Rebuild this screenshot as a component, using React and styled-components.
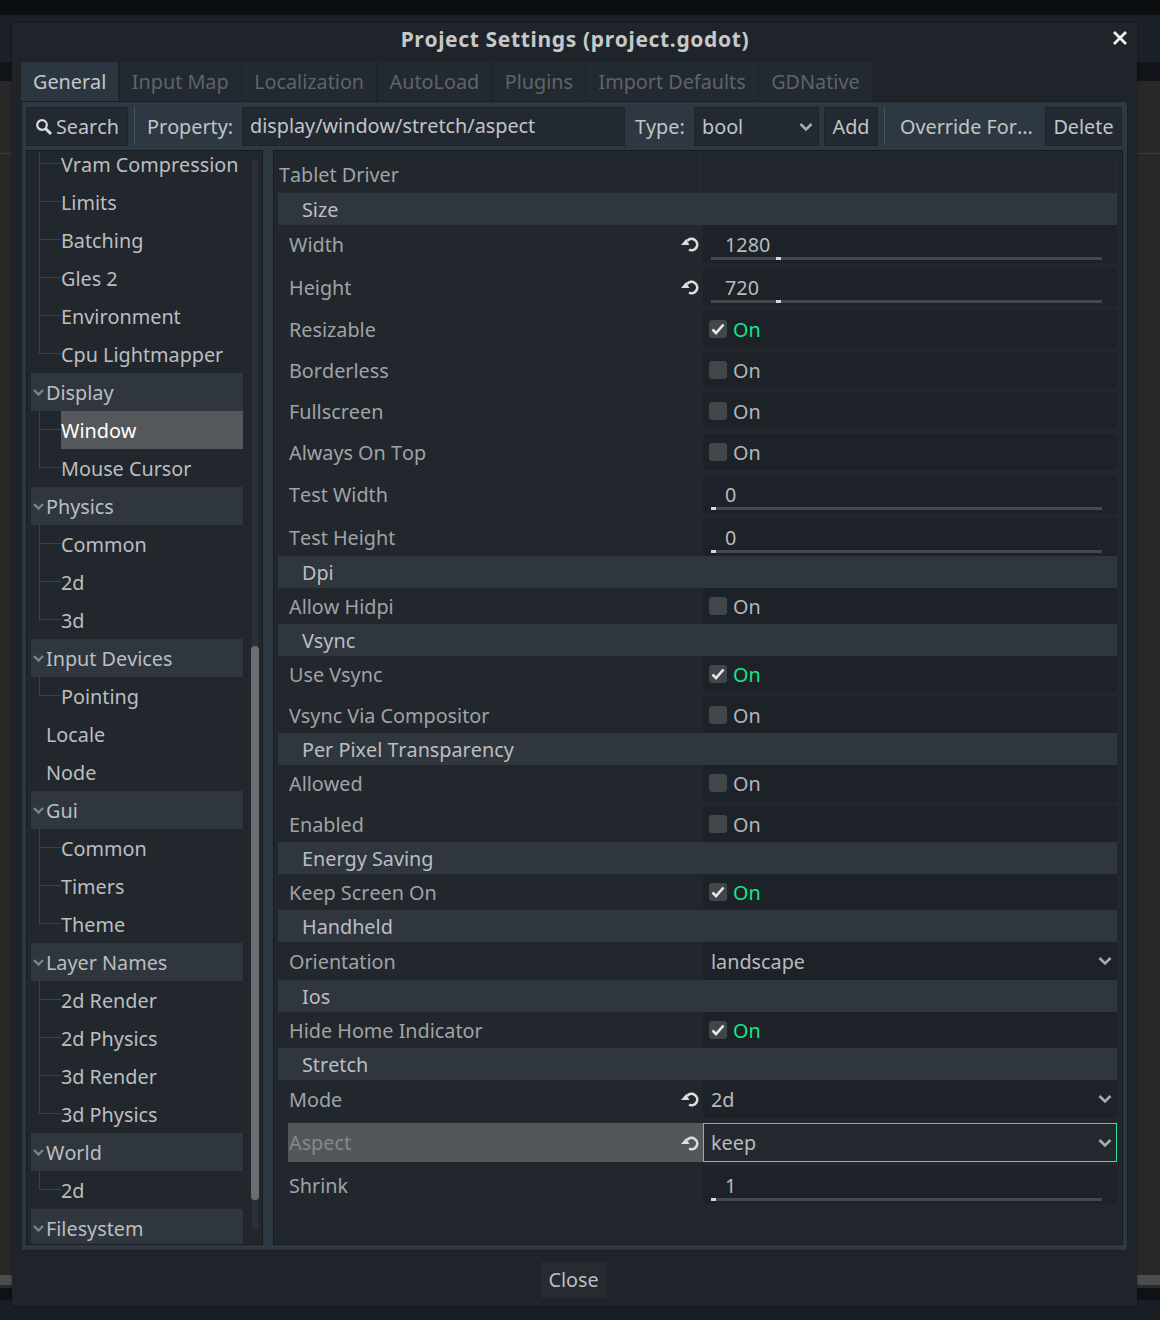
import styled, { createGlobalStyle } from 'styled-components';

const GlobalStyle = createGlobalStyle`
  html, body {
    margin: 0;
    padding: 0;
    width: 1160px;
    height: 1320px;
    overflow: hidden;
  }
  body {
    font-family: "Noto Sans", sans-serif;
    font-size: 19.8px;
    font-kerning: none;
    background: linear-gradient(
      to bottom,
      #0b0f12 0 15px,
      #1b2026 15px 62px,
      #11151a 62px 81px,
      #282828 81px 153px,
      #5a2a3c 153px 154px,
      #282828 154px 1275px,
      #4c4c4c 1275px 1285px,
      #2a2a2a 1285px 1288px,
      #0e1216 1288px 1300px,
      #1a1f25 1300px 1320px
    );
  }
`;

const DialogWindow = styled.div`
  box-sizing: border-box;
  width: 1125px;
  height: 1283px;
  margin: 23px 0 0 12px;
  padding: 0 9px;
  background: #1f242b;
  display: flex;
  flex-direction: column;
  box-shadow: 0 0 2px rgba(0, 0, 0, 0.5);
`;

const TitleBar = styled.div`
  box-sizing: border-box;
  height: 39px;
  flex: none;
  position: relative;
  display: flex;
  align-items: center;
  justify-content: center;
  font-size: 21px;
  font-weight: 700;
  letter-spacing: 0.65px;
  color: #c6c8c9;
  padding: 0 0 7px 1px;
`;

const CloseX = styled.svg`
  position: absolute;
  right: 0;
  top: 7px;
  width: 16px;
  height: 16px;
`;

const TabBar = styled.div`
  display: flex;
  gap: 1.5px;
  height: 39px;
  flex: none;
`;

const Tab = styled.div`
  box-sizing: border-box;
  height: 39px;
  padding: 0 12px;
  display: flex;
  align-items: center;
  background: ${p => (p.$active ? '#2c3640' : '#232930')};
  color: ${p => (p.$active ? '#c4c6c7' : '#5f6467')};
`;

const TabPanel = styled.div`
  box-sizing: border-box;
  height: 1150px;
  flex: none;
  padding: 6px 6px 6px 5px;
  background: #2e3842;
  box-shadow: inset 0 0 0 1px #1a1f25;
  display: flex;
  flex-direction: column;
  gap: 4px;
`;

const Toolbar = styled.div`
  height: 39px;
  flex: none;
  display: flex;
  align-items: stretch;
  color: #c2c4c5;
`;

const ToolButton = styled.div`
  box-sizing: border-box;
  display: flex;
  align-items: center;
  justify-content: ${p => (p.$between ? 'space-between' : 'center')};
  width: ${p => p.$w}px;
  margin-right: ${p => p.$mr || 0}px;
  padding: ${p => p.$pad || '0'};
  background: #232930;
  box-shadow: inset 0 0 0 1px #1f242a;
`;

const Separator = styled.div`
  width: 1px;
  height: 37px;
  margin: 0 ${p => p.$r}px 0 ${p => p.$l}px;
  background: #48525b;
  flex: none;
`;

const ToolLabel = styled.div`
  display: flex;
  align-items: center;
  width: ${p => p.$w}px;
  flex: none;
`;

const PropertyInput = styled.div`
  box-sizing: border-box;
  width: 383px;
  margin-right: 10px;
  padding: 0 0 3px 8px;
  display: flex;
  align-items: center;
  background: #232930;
  box-shadow: inset 0 0 0 1px #1f242a;
`;

const Split = styled.div`
  flex: 1;
  min-height: 0;
  display: flex;
  gap: 10px;
`;

const TreePanel = styled.div`
  box-sizing: border-box;
  width: 237px;
  height: 1095px;
  flex: none;
  background: #21272d;
  border: 1px solid #181c21;
  overflow: hidden;
  display: flex;
  padding-left: 4px;
`;

const TreeList = styled.div`
  width: 212px;
  flex: none;
  margin-top: -6px;
`;

const TreeRow = styled.div`
  box-sizing: border-box;
  position: relative;
  height: 38px;
  display: flex;
  align-items: center;
  color: ${p => (p.$selected ? '#ffffff' : '#bcbec0')};
  padding-left: ${p => (p.$depth === 2 ? 30 : 15)}px;
  background: ${p => {
    if (p.$selected) return 'linear-gradient(to right, transparent 30px, #54585b 30px)';
    return p.$group ? '#2f363d' : 'transparent';
  }};

  &::before {
    content: ${p => (p.$depth === 2 ? '""' : 'none')};
    position: absolute;
    left: 8px;
    top: 0;
    width: 1px;
    height: ${p => (p.$last ? '19px' : '38px')};
    background: #3b4248;
  }

  &::after {
    content: ${p => (p.$depth === 2 ? '""' : 'none')};
    position: absolute;
    left: 8px;
    top: 18px;
    width: 22px;
    height: 1px;
    background: #3b4248;
  }
`;

const Arrow = styled.svg`
  position: absolute;
  left: 2px;
  top: 14px;
  width: 11px;
  height: 11px;
`;

const ScrollTrack = styled.div`
  width: 6px;
  height: 1070px;
  margin: 9px 0 0 9px;
  flex: none;
  position: relative;
  background: #2b3138;
  border-radius: 3px;
`;

const ScrollGrab = styled.div`
  position: absolute;
  left: -1px;
  top: 486px;
  width: 8px;
  height: 554px;
  border-radius: 4px;
  background: #6a6e71;
`;

const Inspector = styled.div`
  box-sizing: border-box;
  width: 850px;
  height: 1095px;
  flex: none;
  background: #21272d;
  border: 1px solid #181c21;
  padding: 4px 5px 0 4px;
  display: flex;
  flex-direction: column;
`;

const TabletRow = styled.div`
  box-sizing: border-box;
  height: 38px;
  flex: none;
  display: flex;
  align-items: center;
  border-top: 1px solid #262c32;
  color: #a0a3a5;
  padding-left: 1px;
  position: relative;
`;

const TabletValue = styled.div`
  margin-left: auto;
  width: 418px;
  height: 100%;
  border-left: 1px solid #2a3036;
  border-right: 1px solid #262c32;
  box-sizing: border-box;
`;

const Section = styled.div`
  height: 32px;
  flex: none;
  display: flex;
  align-items: center;
  padding-left: 24px;
  background: #2f363d;
  color: #bcbec0;
`;

const PropRow = styled.div`
  height: ${p => p.$h}px;
  margin-bottom: ${p => p.$mb || 0}px;
  flex: none;
  display: flex;
`;

const PropLabel = styled.div`
  box-sizing: border-box;
  width: 415px;
  margin-left: 10px;
  padding-left: 1px;
  display: flex;
  align-items: center;
  justify-content: space-between;
  color: ${p => (p.$hover ? '#85898b' : '#a0a3a5')};
  background: ${p => (p.$hover ? '#53575a' : 'transparent')};
`;

const ValueBox = styled.div`
  box-sizing: border-box;
  width: 414px;
  flex: none;
  display: flex;
  align-items: center;
  color: #b8babc;
  background: ${p => (p.$focus ? '#23292f' : '#1d2228')};
  border: ${p => (p.$focus ? '1px solid #2ee59d' : 'none')};
  padding: ${p => (p.$focus ? '0 4px 0 7px' : '0 5px 0 8px')};
`;

const SliderBox = styled(ValueBox)`
  flex-direction: column;
  align-items: stretch;
  padding: 0 15px 0 8px;
`;

const SliderText = styled.div`
  height: 32px;
  padding: 6px 0 0 14px;
  box-sizing: border-box;
  display: flex;
  align-items: center;
`;

const SliderBar = styled.div`
  height: 3px;
  background: #44494d;
  position: relative;
`;

const SliderGrab = styled.div`
  position: absolute;
  top: 0;
  height: 3px;
  width: 5px;
  background: #d5d6d7;
`;

const CheckBox = styled.div`
  width: 18px;
  height: 18px;
  border-radius: 3px;
  margin: 0 6px 0 -2px;
  background: #41464b;
  display: flex;
  align-items: center;
  justify-content: center;
`;

const OnText = styled.span`
  color: ${p => (p.$on ? '#17e68a' : '#b4b6b8')};
`;

const EnumText = styled.span`
  flex: 1;
`;

const Footer = styled.div`
  flex: 1;
  display: flex;
  justify-content: center;
  padding: 11px 2px 0 0;
`;

const CloseButton = styled.div`
  box-sizing: border-box;
  width: 66px;
  height: 36px;
  padding-bottom: 2px;
  display: flex;
  align-items: center;
  justify-content: center;
  background: #252b31;
  color: #bcbec0;
`;

const Chevron = ({ color = '#a8abad' }) => (
  <svg width="14" height="10" viewBox="0 0 14 10" fill="none">
    <path d="M1.5 2 L7 7.5 L12.5 2" stroke={color} strokeWidth="2.6" />
  </svg>
);

const ResetIcon = () => (
  <svg width="18" height="16" viewBox="0 0 18 16" fill="none" style={{ marginRight: 4 }}>
    <path d="M6.2 4.8 A5.7 5.7 0 1 1 8 13.7" stroke="#dcdddd" strokeWidth="2.6" />
    <path d="M0 9 L5.2 3 L8.4 9 Z" fill="#dcdddd" />
  </svg>
);

const Check = () => (
  <svg width="14" height="12" viewBox="0 0 14 12" fill="none">
    <path d="M1.5 6.5 L5 10 L12.5 1.5" stroke="#e8e8e8" strokeWidth="2.6" />
  </svg>
);

const TREE = [
  { t: 'Vram Compression', d: 2 },
  { t: 'Limits', d: 2 },
  { t: 'Batching', d: 2 },
  { t: 'Gles 2', d: 2 },
  { t: 'Environment', d: 2 },
  { t: 'Cpu Lightmapper', d: 2, last: true },
  { t: 'Display', g: true },
  { t: 'Window', d: 2, sel: true },
  { t: 'Mouse Cursor', d: 2, last: true },
  { t: 'Physics', g: true },
  { t: 'Common', d: 2 },
  { t: '2d', d: 2 },
  { t: '3d', d: 2, last: true },
  { t: 'Input Devices', g: true },
  { t: 'Pointing', d: 2, last: true },
  { t: 'Locale', d: 1 },
  { t: 'Node', d: 1 },
  { t: 'Gui', g: true },
  { t: 'Common', d: 2 },
  { t: 'Timers', d: 2 },
  { t: 'Theme', d: 2, last: true },
  { t: 'Layer Names', g: true },
  { t: '2d Render', d: 2 },
  { t: '2d Physics', d: 2 },
  { t: '3d Render', d: 2 },
  { t: '3d Physics', d: 2, last: true },
  { t: 'World', g: true },
  { t: '2d', d: 2, last: true },
  { t: 'Filesystem', g: true },
];

const PROPS = [
  { section: 'Size' },
  { label: 'Width', kind: 'slider', value: '1280', at: 65, reset: true, mb: 5 },
  { label: 'Height', kind: 'slider', value: '720', at: 65, reset: true, mb: 5 },
  { label: 'Resizable', kind: 'check', on: true, mb: 5 },
  { label: 'Borderless', kind: 'check', mb: 5 },
  { label: 'Fullscreen', kind: 'check', mb: 5 },
  { label: 'Always On Top', kind: 'check', mb: 5 },
  { label: 'Test Width', kind: 'slider', value: '0', at: 0, mb: 5 },
  { label: 'Test Height', kind: 'slider', value: '0', at: 0 },
  { section: 'Dpi' },
  { label: 'Allow Hidpi', kind: 'check' },
  { section: 'Vsync' },
  { label: 'Use Vsync', kind: 'check', on: true, mb: 5 },
  { label: 'Vsync Via Compositor', kind: 'check' },
  { section: 'Per Pixel Transparency' },
  { label: 'Allowed', kind: 'check', mb: 5 },
  { label: 'Enabled', kind: 'check' },
  { section: 'Energy Saving' },
  { label: 'Keep Screen On', kind: 'check', on: true },
  { section: 'Handheld' },
  { label: 'Orientation', kind: 'enum', value: 'landscape' },
  { section: 'Ios' },
  { label: 'Hide Home Indicator', kind: 'check', on: true },
  { section: 'Stretch' },
  { label: 'Mode', kind: 'enum', value: '2d', reset: true, mb: 5 },
  { label: 'Aspect', kind: 'enum', value: 'keep', reset: true, hover: true, mb: 4 },
  { label: 'Shrink', kind: 'slider', value: '1', at: 0 },
];

const PropertyRow = ({ label, kind, value, at, on, reset, hover, mb }) => (
  <PropRow $h={kind === 'check' ? 36 : hover ? 39 : 38} $mb={mb}>
    <PropLabel $hover={hover}>
      {label}
      {reset && <ResetIcon />}
    </PropLabel>
    {kind === 'slider' && (
      <SliderBox>
        <SliderText>{value}</SliderText>
        <SliderBar>
          <SliderGrab style={{ left: at }} />
        </SliderBar>
      </SliderBox>
    )}
    {kind === 'check' && (
      <ValueBox>
        <CheckBox>{on && <Check />}</CheckBox>
        <OnText $on={on}>On</OnText>
      </ValueBox>
    )}
    {kind === 'enum' && (
      <ValueBox $focus={hover}>
        <EnumText>{value}</EnumText>
        <Chevron />
      </ValueBox>
    )}
  </PropRow>
);

const App = () => (
  <>
    <GlobalStyle />
    <DialogWindow>
      <TitleBar>
        Project Settings (project.godot)
        <CloseX viewBox="0 0 16 16" fill="none">
          <path d="M2 2 L14 14 M14 2 L2 14" stroke="#f2f2f2" strokeWidth="2.8" />
        </CloseX>
      </TitleBar>
      <TabBar>
        {['General', 'Input Map', 'Localization', 'AutoLoad', 'Plugins', 'Import Defaults', 'GDNative'].map((t, i) => (
          <Tab key={t} $active={i === 0}>{t}</Tab>
        ))}
      </TabBar>
      <TabPanel>
        <Toolbar>
          <ToolButton $w={102}>
            <svg width="18" height="18" viewBox="0 0 18 18" fill="none" style={{ marginRight: 3 }}>
              <circle cx="7" cy="7" r="4.8" stroke="#dcdddd" strokeWidth="2.2" />
              <path d="M10.5 10.5 L16 16" stroke="#dcdddd" strokeWidth="3" />
            </svg>
            Search
          </ToolButton>
          <Separator $l={6} $r={12} />
          <ToolLabel $w={95}>Property:</ToolLabel>
          <PropertyInput>display/window/stretch/aspect</PropertyInput>
          <ToolLabel $w={59}>Type:</ToolLabel>
          <ToolButton $w={125} $mr={5} $between $pad="0 6px 0 8px">
            bool
            <Chevron />
          </ToolButton>
          <ToolButton $w={54}>Add</ToolButton>
          <Separator $l={6} $r={15} />
          <ToolLabel $w={145}>Override For...</ToolLabel>
          <ToolButton $w={77}>Delete</ToolButton>
        </Toolbar>
        <Split>
          <TreePanel>
            <TreeList>
              {TREE.map((r, i) => (
                <TreeRow key={i} $depth={r.d} $group={r.g} $selected={r.sel} $last={r.last}>
                  {r.g && (
                    <Arrow viewBox="0 0 11 11" fill="none">
                      <path d="M1 3 L5.5 7.5 L10 3" stroke="#7d8285" strokeWidth="2.4" />
                    </Arrow>
                  )}
                  {r.t}
                </TreeRow>
              ))}
            </TreeList>
            <ScrollTrack>
              <ScrollGrab />
            </ScrollTrack>
          </TreePanel>
          <Inspector>
            <TabletRow>
              Tablet Driver
              <TabletValue />
            </TabletRow>
            {PROPS.map((p, i) =>
              p.section ? <Section key={i}>{p.section}</Section> : <PropertyRow key={i} {...p} />
            )}
          </Inspector>
        </Split>
      </TabPanel>
      <Footer>
        <CloseButton>Close</CloseButton>
      </Footer>
    </DialogWindow>
  </>
);

export default App;
